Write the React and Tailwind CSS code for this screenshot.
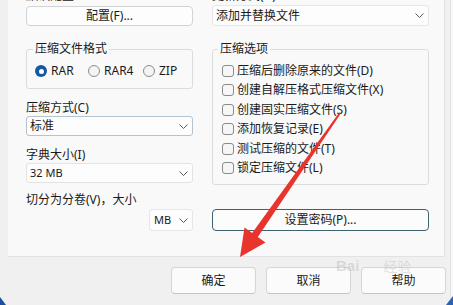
import React from 'react';

const Chevron = () => (
    <svg width="9" height="5" viewBox="0 0 9 5" className="shrink-0">
        <path d="M0.5 0.5 L4.5 4.5 L8.5 0.5" fill="none" stroke="#5c5c5c" strokeWidth="1" />
    </svg>
);

const Dropdown = ({ value, className = '', textClass = '' }) => (
    <div className={`flex items-center justify-between bg-[#fdfdfd] border rounded-[3px] pl-[3px] pr-[4px] ${className}`}>
        <span className={textClass}>{value}</span>
        <Chevron />
    </div>
);

const Radio = ({ label, checked, width }) => (
    <div className={`flex items-center gap-[4px] ${width}`}>
        {checked ? (
            <span className="w-[12px] h-[12px] rounded-full bg-[#1459a3] flex items-center justify-center">
                <span className="w-[5px] h-[5px] rounded-full bg-white" />
            </span>
        ) : (
            <span className="w-[12px] h-[12px] rounded-full border border-[#8c8c8c] bg-[#f4f4f4]" />
        )}
        <span className="leading-[16px]">{label}</span>
    </div>
);

const Check = ({ label }) => (
    <div className="flex items-center gap-[3px] h-[19.5px]">
        <span className="w-[12px] h-[12px] rounded-[3px] border border-[#8a8a8a] bg-[#f6f6f6] shrink-0" />
        <span className="leading-[16px] whitespace-nowrap">{label}</span>
    </div>
);

const options = [
    '压缩后删除原来的文件(D)',
    '创建自解压格式压缩文件(X)',
    '创建固实压缩文件(S)',
    '添加恢复记录(E)',
    '测试压缩的文件(T)',
    '锁定压缩文件(L)',
];

export default function App() {
    return (
        <div className="relative w-[453px] h-[305px] overflow-hidden bg-[#f0f0f0] text-[12px] text-[#1a1a1a] font-['Segoe_UI','Noto_Sans','Noto_Sans_CJK_SC',sans-serif]">
            <div className="flex h-full">
                <div className="w-[8px] shrink-0" />
                <div className="w-[442px] shrink-0 flex flex-col">
                    {/* main panel */}
                    <div className="h-[257px] w-[437px] bg-[#f9f9f9] border-r border-b border-[#e2e2e2] flex pl-[18px] pr-[15px] gap-[19px] overflow-hidden">
                        {/* left column */}
                        <div className="w-[167px] shrink-0 flex flex-col">
                            <div className="-mt-[12px] h-[18px] leading-[16px]">默认配置</div>
                            <button className="h-[20px] bg-[#fdfdfd] border border-[#d3d3d3] rounded-[4px] flex items-center justify-center leading-[16px]">
                                配置(F)...
                            </button>
                            <fieldset className="mt-[15px] border border-[#dcdcdc] rounded-[3px] pl-[8px] pb-[9px]">
                                <legend className="-ml-[2px] px-[2px] leading-[16px]">压缩文件格式</legend>
                                <div className="mt-[6px] flex h-[16px] items-center">
                                    <Radio label="RAR" checked width="w-[53px]" />
                                    <Radio label="RAR4" width="w-[55px]" />
                                    <Radio label="ZIP" width="" />
                                </div>
                            </fieldset>
                            <div className="mt-[11px] h-[16px] leading-[16px]">压缩方式(C)</div>
                            <Dropdown value="标准" className="h-[20px] border-[#b3c3d0]" textClass="leading-[16px]" />
                            <div className="mt-[11px] h-[16px] leading-[16px]">字典大小(I)</div>
                            <Dropdown value="32 MB" className="h-[20px] border-[#e3e3e3]" textClass="text-[11px] leading-[16px]" />
                            <div className="mt-[9px] h-[16px] leading-[16px]">切分为分卷(V)，大小</div>
                            <div className="mt-[1px] flex justify-end">
                                <Dropdown value="MB" className="w-[44px] h-[22px] border-[#e6e6e6] pl-[4px]" textClass="text-[11px] leading-[16px]" />
                            </div>
                        </div>

                        {/* right column */}
                        <div className="w-[217px] shrink-0 flex flex-col">
                            <div className="-mt-[12px] h-[18px] leading-[16px]">更新方式(U)</div>
                            <Dropdown value="添加并替换文件" className="-mt-[1px] h-[21px] border-[#e6e6e6]" textClass="leading-[16px]" />
                            <fieldset className="mt-[15px] border border-[#dcdcdc] rounded-[3px] pl-[9px] pt-[4px] pb-[6px]">
                                <legend className="-ml-[4px] px-[2px] leading-[16px]">压缩选项</legend>
                                {options.map((o) => (
                                    <Check key={o} label={o} />
                                ))}
                            </fieldset>
                            <button className="mt-[24px] h-[22px] bg-[#fcfcfc] border border-[#3b6470] rounded-[4px] flex items-center justify-center leading-[16px]">
                                设置密码(P)...
                            </button>
                        </div>
                    </div>

                    {/* dialog buttons */}
                    <div className="mt-[10px] pl-[163px] flex gap-[10px]">
                        {['确定', '取消', '帮助'].map((b) => (
                            <button
                                key={b}
                                className="w-[85px] h-[27px] bg-[#fbfbfb] border border-[#d6d6d6] border-b-[#c4c4c4] rounded-[4px] flex items-center justify-center leading-[16px]"
                            >
                                {b}
                            </button>
                        ))}
                    </div>
                </div>
                <div className="w-[1px] shrink-0 bg-[#e4e4e4]" />
                <div className="flex-1 bg-[#f7f7f7]" />
            </div>

            {/* watermark */}
            <div className="absolute left-[336px] top-[257px] flex items-end gap-[2px] text-[rgba(170,170,170,0.35)] pointer-events-none">
                <span className="text-[15px] font-bold leading-[18px] font-['Liberation_Sans',sans-serif]">Bai</span>
                <span className="text-[14px] leading-[16px] ml-[22px]">经验</span>
            </div>

            {/* red arrow annotation */}
            <svg className="absolute inset-0 pointer-events-none" width="453" height="305" viewBox="0 0 453 305">
                <polygon
                    points="339.2,112.4 340.8,113.6 257.8,237 265.5,242.5 240,257 244.5,227.5 252.2,233"
                    fill="#e8342d"
                />
                <polygon points="0,297 6,305 0,305" fill="#1d4f9c" />
                <polygon points="453,296 453,305 446,305" fill="#2a63b5" />
            </svg>
        </div>
    );
}
